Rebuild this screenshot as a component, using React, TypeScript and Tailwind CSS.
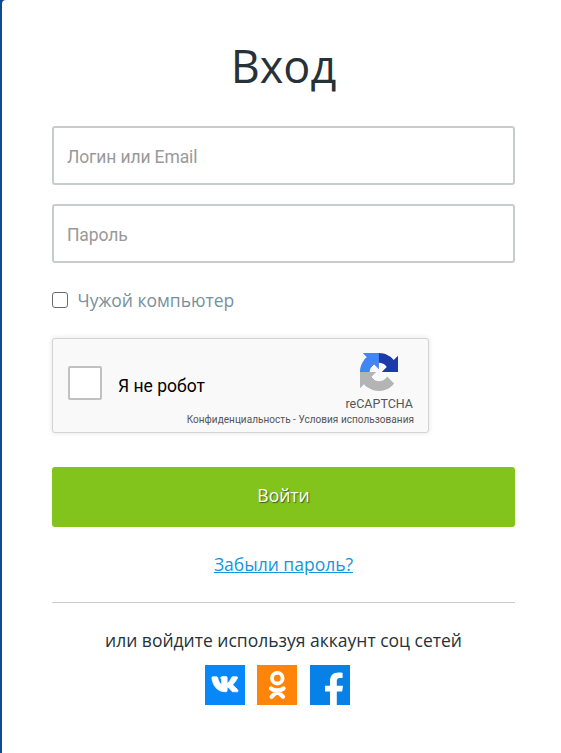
import type { ReactNode } from 'react';

interface TextFieldProps {
  type: 'text' | 'password';
  placeholder: string;
  className?: string;
}

function TextField({ type, placeholder, className = '' }: TextFieldProps) {
  return (
    <input
      type={type}
      placeholder={placeholder}
      className={`block h-[59px] w-full rounded-[3px] border-2 border-[#c7cdcf] bg-white px-[13px] pt-[3px] font-['Roboto',sans-serif] text-[17.5px] tracking-[-0.13px] outline-none placeholder:text-[#999] ${className}`}
    />
  );
}

function RecaptchaLogo() {
  return (
    <svg viewBox="0 0 64 64" className="size-[38px]" aria-hidden="true">
      <path
        fill="#1c3aa9"
        d="M64 31.955l-.033-1.37V4.687l-7.16 7.16C50.948 4.674 42.033.093 32.05.093c-10.4 0-19.622 4.96-25.458 12.64l11.736 11.86a15.55 15.55 0 0 1 4.754-5.334c2.05-1.6 4.952-2.906 8.968-2.906.485 0 .86.057 1.135.163 4.976.393 9.288 3.14 11.828 7.124l-8.307 8.307L64 31.953"
      />
      <path
        fill="#4285f4"
        d="M31.862.094l-1.37.033H4.594l7.16 7.16C4.58 13.147 0 22.06 0 32.046c0 10.4 4.96 19.622 12.64 25.458L24.5 45.768a15.55 15.55 0 0 1-5.334-4.754c-1.6-2.05-2.906-4.952-2.906-8.968 0-.485.057-.86.163-1.135.393-4.976 3.14-9.288 7.124-11.828l8.307 8.307L31.86.095"
      />
      <path
        fill="#b4b4b4"
        d="M.001 32.045l.033 1.37v25.898l7.16-7.16c5.86 7.173 14.774 11.754 24.76 11.754 10.4 0 19.622-4.96 25.458-12.64l-11.736-11.86a15.55 15.55 0 0 1-4.754 5.334c-2.05 1.6-4.952 2.906-8.968 2.906-.485 0-.86-.057-1.135-.163-4.976-.393-9.288-3.14-11.828-7.124l8.307-8.307c-10.522.04-22.4.066-27.295-.005"
      />
    </svg>
  );
}

function VkLogo() {
  return (
    <svg viewBox="0 0 30 18" className="mt-[11px] h-[17px] w-[28px]" aria-hidden="true">
      <path
        fill="currentColor"
        stroke="currentColor"
        strokeWidth=".8"
        strokeLinejoin="round"
        d="M15.2 16.8C6.4 16.8 1.6 9.6.9 1.6c0-.6.3-.9 1-.9h4c.7 0 1 .3 1.2.9.9 3.6 2.2 6.2 3.7 7.1.4.2.6 0 .6-.5V4.2c-.1-1.200-.9-1.400-1.100-1.800C10.100 1.500 11.200.4 12.800.4h3.100c1 0 1.400.5 1.400 1.500v5c0 .6.4.8.8.5 1.700-1.200 3-3.800 3.900-5.800.3-.6.6-.9 1.300-.9h4.100c1 0 1.200.5.9 1.300-.8 2.300-3.300 5.200-4.600 6.600-.4.5-.4.8 0 1.300 1.200 1.400 4.300 3.500 5.200 5.400.4.9 0 1.500-.9 1.500h-4.300c-.8 0-1.200-.3-1.700-.9-1.100-1.300-2.400-3.200-3.900-3.800-.5-.2-.8 0-.8.6v2.700c0 1-.3 1.400-2.100 1.400z"
      />
    </svg>
  );
}

function OkLogo() {
  return (
    <svg viewBox="0 0 40 40" className="size-10" fill="none" stroke="currentColor" strokeLinecap="round" aria-hidden="true">
      <circle cx="20.300" cy="13.200" r="5.300" strokeWidth="3.800" />
      <path strokeWidth="4.200" d="M14 23.500c3.600 2.500 9 2.500 12.600 0M20.300 26.200l-5.700 5.600M20.300 26.200l5.700 5.600" />
    </svg>
  );
}

function FacebookLogo() {
  return (
    <svg viewBox="0 0 40 40" className="size-10" aria-hidden="true">
      <path fill="currentColor" d="M20 40V26.500h-5v-5.700h5v-4.300C20 10.500 23 7.500 28.500 7.500c1.600 0 3.200.1 4.100.3v5.100h-2.800c-2.500 0-3 1.300-3 3.200v4.700h6.200l-.8 5.700h-5.400V40z" />
    </svg>
  );
}

function Recaptcha() {
  return (
    <div className="mt-[26px] flex h-[95px] w-[377px] flex-col rounded-[3px] border border-[#d3d3d3] bg-[#f9f9f9] font-['Roboto',sans-serif] shadow-[0_0_4px_1px_rgba(0,0,0,0.08)]">
      <div className="flex h-[74px] justify-between pr-[15px] pl-[15px]">
        <div className="flex pt-[27px]">
          <span className="size-[34px] rounded-[2px] border-2 border-[#c1c1c1] bg-white" />
          <span className="ml-[16px] pt-[8px] text-[17.5px] leading-[24px] text-black">Я не робот</span>
        </div>
        <div className="flex flex-col items-center pt-[14px]">
          <RecaptchaLogo />
          <span className="mt-[5px] text-[12.5px] leading-[16px] text-[#555]">reCAPTCHA</span>
        </div>
      </div>
      <div className="pr-[14px] text-right text-[10px] leading-[14px] tracking-[0.04px] whitespace-nowrap text-[#555]">
        Конфиденциальность - Условия использования
      </div>
    </div>
  );
}

function SocialButton({ label, className, children }: { label: string; className: string; children: ReactNode }) {
  return (
    <button type="button" aria-label={label} className={`flex size-10 justify-center overflow-hidden text-white ${className}`}>
      {children}
    </button>
  );
}

export default function App() {
  return (
    <div className="h-[753px] w-[561px] bg-[#0d4a91] pl-[2px] font-['Open_Sans',sans-serif]">
      <main className="h-full rounded-tl-[4px] bg-white px-[50px] pt-[34px] pr-[46px]">
        <h1 className="h-[92px] text-center text-[45px] leading-[64px] text-[#263238]">Вход</h1>

        <TextField type="text" placeholder="Логин или Email" />
        <TextField type="password" placeholder="Пароль" className="mt-[19px]" />

        <label className="mt-[25px] flex h-6 items-center text-[17.5px] text-[#78909c]">
          <input
            type="checkbox"
            className="mr-[9.5px] size-4 appearance-none rounded-[3px] border border-[#6b6b6b] bg-white"
          />
          Чужой компьютер
        </label>

        <Recaptcha />

        <button
          type="button"
          className="mt-[34px] h-[60px] w-full rounded-[3px] bg-[#82c41c] pb-[4px] text-[17.5px] text-white [text-shadow:1px_1px_1px_rgba(0,0,0,0.5)]"
        >
          Войти
        </button>

        <div className="mt-[25px] flex h-[50px] justify-center text-[17.5px] leading-6">
          <a href="#" className="text-[#1496dd] underline">
            Забыли пароль?
          </a>
        </div>

        <div className="border-t border-[#ccc] pt-[25px]">
          <p className="text-center text-[17.5px] leading-6 text-[#263238]">или войдите используя аккаунт соц сетей</p>
          <div className="mt-[13px] flex pl-[153px]">
            <SocialButton label="ВКонтакте" className="bg-[#0788fa]">
              <VkLogo />
            </SocialButton>
            <SocialButton label="Одноклассники" className="ml-3 bg-[#ff850a]">
              <OkLogo />
            </SocialButton>
            <SocialButton label="Facebook" className="ml-[13px] bg-[#0780e8]">
              <FacebookLogo />
            </SocialButton>
          </div>
        </div>
      </main>
    </div>
  );
}
